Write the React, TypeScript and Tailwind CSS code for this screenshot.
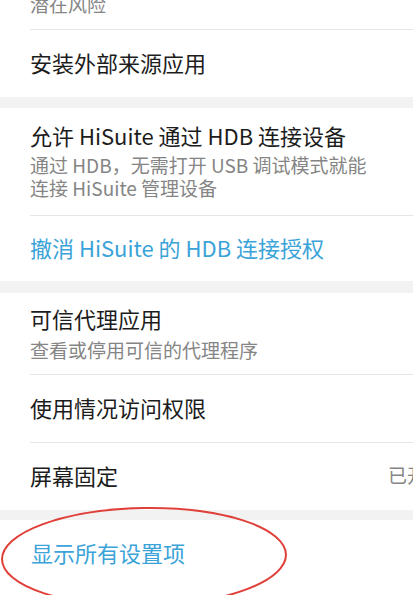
import React from "react";

const font = { fontFamily: '"Noto Sans CJK SC", "Noto Sans", sans-serif' };

function Divider() {
  return <div className="ml-[30px] h-px bg-[#e6e6e6]" />;
}

function Band({ h }: { h: string }) {
  return <div className={`${h} bg-[#f2f2f2]`} />;
}

export default function App() {
  return (
    <div
      className="relative w-[413px] h-[595px] overflow-hidden bg-white"
      style={font}
    >
      {/* partial top item */}
      <div className="h-[29px] flex items-end pl-[30px] pb-[14px]">
        <span className="text-[19px] leading-[23px] text-[#858585]">潜在风险</span>
      </div>
      <Divider />
      <div className="h-[67px] flex items-center pl-[30px] pb-[4px]">
        <span className="text-[22px] leading-[28px] text-[#1c1c1c]">安装外部来源应用</span>
      </div>
      <Band h="h-[11px]" />

      {/* HDB group */}
      <div className="pl-[30px] pt-[13px] pb-[16px]">
        <div className="text-[22px] leading-[28px] text-[#1c1c1c] whitespace-nowrap">
          允许 HiSuite 通过 HDB 连接设备
        </div>
        <div className="mt-[4px] text-[19px] leading-[23px] text-[#858585] whitespace-nowrap">
          通过 HDB，无需打开 USB 调试模式就能
          <br />
          连接 HiSuite 管理设备
        </div>
      </div>
      <Divider />
      <div className="h-[65px] flex items-center pl-[30px] pb-[4px]">
        <span className="text-[22px] leading-[28px] text-[#3aa3d8] whitespace-nowrap">
          撤消 HiSuite 的 HDB 连接授权
        </span>
      </div>
      <Band h="h-[12px]" />

      {/* trust agents group */}
      <div className="pl-[30px] pt-[11px] pb-[13px]">
        <div className="text-[22px] leading-[28px] text-[#1c1c1c]">可信代理应用</div>
        <div className="mt-[6px] text-[19px] leading-[23px] text-[#858585]">
          查看或停用可信的代理程序
        </div>
      </div>
      <Divider />
      <div className="h-[67px] flex items-center pl-[30px] pb-[4px]">
        <span className="text-[22px] leading-[28px] text-[#1c1c1c]">使用情况访问权限</span>
      </div>
      <Divider />
      <div className="h-[67px] flex items-center pl-[30px] pb-[4px]">
        <span className="text-[22px] leading-[28px] text-[#1c1c1c]">屏幕固定</span>
        <span className="ml-auto mr-[-32px] text-[19px] leading-[23px] text-[#858585] whitespace-nowrap">
          已开启
        </span>
      </div>
      <Band h="h-[10px]" />
      <div className="h-[70px] flex items-center pl-[31px] pb-[6px]">
        <span className="text-[22px] leading-[28px] text-[#3aa3d8]">显示所有设置项</span>
      </div>

      {/* red annotation ellipse */}
      <svg
        className="absolute left-0 top-[500px] pointer-events-none"
        width="300"
        height="120"
        viewBox="0 0 300 120"
      >
        <ellipse
          cx="144"
          cy="57"
          rx="142"
          ry="49"
          fill="none"
          stroke="#e0403a"
          strokeWidth="2"
          transform="rotate(-1 144 57)"
        />
      </svg>
    </div>
  );
}
